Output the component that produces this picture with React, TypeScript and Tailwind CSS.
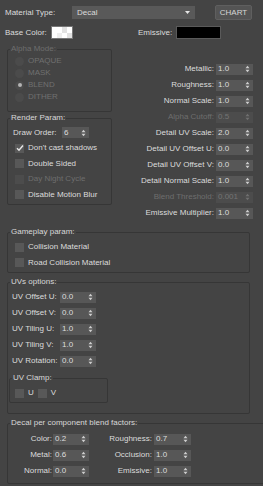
import clsx from "clsx";
import type { ReactNode } from "react";

function Arrows({ dim }: { dim?: boolean }) {
  return (
    <svg width="5" height="8" viewBox="0 0 5 8" className={dim ? "fill-[#707070]" : "fill-[#cfcfcf]"}>
      <polygon points="0.5,3.3 2.5,0.8 4.5,3.3" />
      <polygon points="0.5,4.7 2.5,7.2 4.5,4.7" />
    </svg>
  );
}

function Spin({ v, w, dim }: { v: string; w: string; dim?: boolean }) {
  return (
    <div
      className={clsx(
        "flex h-[11px] shrink-0 items-center justify-between pl-[2px] pr-[3px]",
        w,
        dim ? "bg-[#4c4c4c] text-[#747474]" : "bg-[#575757] text-[#dedede]"
      )}
    >
      <span>{v}</span>
      <Arrows dim={dim} />
    </div>
  );
}

function Check({ label, on, dim }: { label: string; on?: boolean; dim?: boolean }) {
  return (
    <div className="flex h-[15.5px] items-center gap-[4px] pl-[7px]">
      <div className={clsx("flex h-[9px] w-[9px] items-center justify-center", dim ? "bg-[#4c4c4c]" : "bg-[#585858]")}>
        {on && (
          <svg width="8" height="8" viewBox="0 0 8 8">
            <polyline points="1,4.2 3,6.2 7,1.5" fill="none" stroke="#e8e8e8" strokeWidth="1.4" />
          </svg>
        )}
      </div>
      <span className={dim ? "text-[#6e6e6e]" : ""}>{label}</span>
    </div>
  );
}

function Radio({ label, on }: { label: string; on?: boolean }) {
  return (
    <div className="flex h-[12px] items-center gap-[4px] pl-[7px] text-[#707070]">
      <div className="flex h-[9px] w-[9px] items-center justify-center rounded-full bg-[#4b4b4b]">
        {on && <div className="h-[4px] w-[4px] rounded-full bg-[#b4b4b4]" />}
      </div>
      <span>{label}</span>
    </div>
  );
}

function Group({ title, dim, className, children }: { title: string; dim?: boolean; className?: string; children: ReactNode }) {
  return (
    <fieldset className={clsx("rounded-[2px] border border-[#363636]", className)}>
      <legend className={clsx("ml-[2px] px-[1px] leading-[10px]", dim ? "text-[#6e6e6e]" : "text-[#d8d8d8]")}>{title}</legend>
      {children}
    </fieldset>
  );
}

const rightRows: [string, string, boolean?][] = [
  ["Metallic:", "1.0"],
  ["Roughness:", "1.0"],
  ["Normal Scale:", "1.0"],
  ["Alpha Cutoff:", "0.5", true],
  ["Detail UV Scale:", "2.0"],
  ["Detail UV Offset U:", "0.0"],
  ["Detail UV Offset V:", "0.0"],
  ["Detail Normal Scale:", "1.0"],
  ["Blend Threshold:", "0.001", true],
  ["Emissive Multiplier:", "1.0"],
];

const uvRows = [
  ["UV Offset U:", "0.0"],
  ["UV Offset V:", "0.0"],
  ["UV Tiling U:", "1.0"],
  ["UV Tiling V:", "1.0"],
  ["UV Rotation:", "0.0"],
];

const blendRows = [
  ["Color:", "0.2", "Roughness:", "0.7"],
  ["Metal:", "0.6", "Occlusion:", "1.0"],
  ["Normal:", "0.0", "Emissive:", "1.0"],
];

export default function App() {
  return (
    <div className="h-[486px] w-[263px] overflow-hidden bg-[#444444] font-['Liberation_Sans',Arial,sans-serif] text-[8px] leading-[10px] text-[#dcdcdc]">
      <div className="mt-[5px] flex h-[15px] items-center pl-[5px]">
        <span className="w-[67px]">Material Type:</span>
        <div className="flex h-[13px] w-[123px] items-center justify-between bg-[#595959] pl-[5px] pr-[5px]">
          <span>Decal</span>
          <svg width="5" height="3" viewBox="0 0 5 3">
            <polygon points="0,0 5,0 2.5,3" fill="#e6e6e6" />
          </svg>
        </div>
        <div className="ml-[20px] flex h-[15px] w-[37px] items-center justify-center rounded-[2px] border border-[#5f5f5f] bg-[#545454] text-[#d6d6d6]">
          CHART
        </div>
      </div>

      <div className="mt-[6px] flex h-[13px] items-center pl-[5px]">
        <span className="w-[46px]">Base Color:</span>
        <div className="grid h-[13px] w-[22px] grid-cols-4 grid-rows-2 border border-[#777]">
          <div className="bg-white" />
          <div className="bg-white" />
          <div className="bg-[#e2e2e2]" />
          <div className="bg-white" />
          <div className="bg-white" />
          <div className="bg-[#eeeeee]" />
          <div className="bg-white" />
          <div className="bg-[#e2e2e2]" />
        </div>
        <span className="ml-[65px] w-[38px]">Emissive:</span>
        <div className="h-[13px] w-[45px] border border-[#5a5a5a] bg-black" />
      </div>

      <div className="mt-[5px] flex items-start pl-[7px]">
        <div className="flex w-[105px] flex-col">
          <Group title="Alpha Mode:" dim className="pb-[8px] pt-[1px]">
            <Radio label="OPAQUE" />
            <Radio label="MASK" />
            <Radio label="BLEND" on />
            <Radio label="DITHER" />
          </Group>
          <Group title="Render Param:" className="mt-[1px] pb-[1px]">
            <div className="mt-[4px] flex h-[11px] items-center pl-[5px]">
              <span className="w-[49px]">Draw Order:</span>
              <Spin v="6" w="w-[27px]" />
            </div>
            <div className="mt-[2.5px]">
              <Check label="Don't cast shadows" on />
              <Check label="Double Sided" />
              <Check label="Day Night Cycle" dim />
              <Check label="Disable Motion Blur" />
            </div>
          </Group>
        </div>
        <div className="flex flex-1 flex-col gap-[5px] pr-[10px] pt-[19.5px]">
          {rightRows.map(([label, v, dim]) => (
            <div key={label} className="flex h-[11px] items-center justify-end gap-[2px]">
              <span className={dim ? "text-[#6e6e6e]" : ""}>{label}</span>
              <Spin v={v} w="w-[37px]" dim={dim} />
            </div>
          ))}
        </div>
      </div>

      <div className="pl-[7px]">
        <Group title="Gameplay param:" className="mt-[8.5px] w-[243px] pb-[1px]">
          <div className="mt-[2.5px]">
            <Check label="Collision Material" />
            <Check label="Road Collision Material" />
          </div>
        </Group>

        <Group title="UVs options:" className="mt-[4.5px] w-[243px] pb-[10px]">
          <div className="mt-[2px]">
            {uvRows.map(([label, v]) => (
              <div key={label} className="flex h-[16px] items-center pl-[4px]">
                <span className="w-[48px]">{label}</span>
                <Spin v={v} w="w-[36px]" />
              </div>
            ))}
          </div>
          <Group title="UV Clamp:" className="ml-[1px] mt-[4px] w-[99px] pb-[3px]">
            <div className="mt-[4px] flex h-[12px] items-center pl-[5px]">
              <div className="h-[9px] w-[9px] bg-[#585858]" />
              <span className="ml-[4px]">U</span>
              <div className="ml-[4px] h-[9px] w-[9px] bg-[#585858]" />
              <span className="ml-[4px]">V</span>
            </div>
          </Group>
        </Group>

        <Group title="Decal per component blend factors:" className="mt-[4px] w-[260px] pb-[4px]">
          <div className="mt-[3px]">
            {blendRows.map(([a, av, b, bv]) => (
              <div key={a} className="flex h-[16px] items-center">
                <span className="w-[44px] text-right">{a}</span>
                <div className="ml-[1px]">
                  <Spin v={av} w="w-[36px]" />
                </div>
                <span className="w-[63px] text-right">{b}</span>
                <div className="ml-[2px]">
                  <Spin v={bv} w="w-[37px]" />
                </div>
              </div>
            ))}
          </div>
        </Group>
      </div>
    </div>
  );
}
